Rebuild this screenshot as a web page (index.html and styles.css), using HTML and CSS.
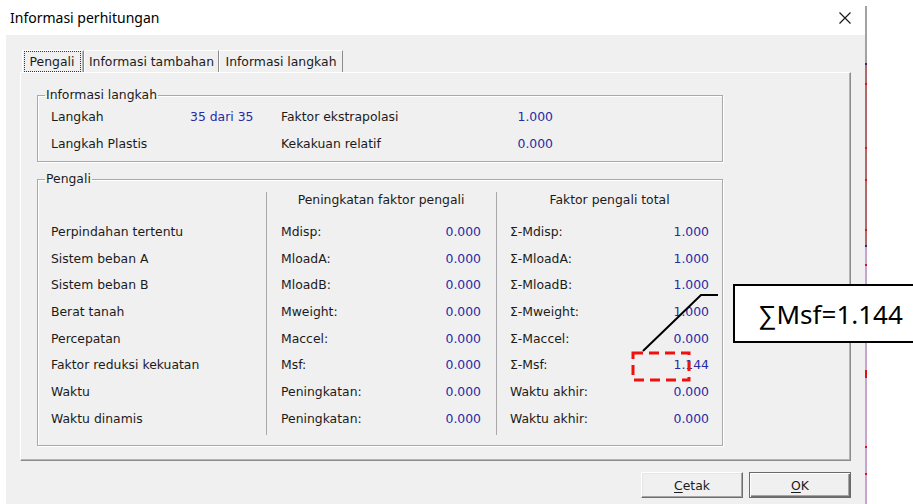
FILE: index.html
```html
<!DOCTYPE html>
<html lang="id">
<head>
<meta charset="utf-8">
<title>Informasi perhitungan</title>
<link rel="stylesheet" href="styles.css">
</head>
<body>
<div class="screen">
  <div class="window">
    <div class="titlebar">
      <span class="title">Informasi perhitungan</span>
      <svg class="close" width="14" height="14" viewBox="0 0 14 14" aria-label="Tutup">
        <path d="M1.5 1.5L12.5 12.5M12.5 1.5L1.5 12.5" stroke="#1a1a1a" stroke-width="1.2" fill="none"/>
      </svg>
    </div>
    <div class="client">
      <div class="tabs">
        <div class="tab active"><span class="focus">Pengali</span></div>
        <div class="tab t2">Informasi tambahan</div>
        <div class="tab t3">Informasi langkah</div>
      </div>
      <div class="panel">
        <fieldset class="group info">
          <legend>Informasi langkah</legend>
          <div class="info-grid">
            <span>Langkah</span><span class="val">35 dari 35</span><span>Faktor ekstrapolasi</span><span class="val num">1.000</span>
            <span>Langkah Plastis</span><span class="val"></span><span>Kekakuan relatif</span><span class="val num">0.000</span>
          </div>
        </fieldset>
        <fieldset class="group mult">
          <legend>Pengali</legend>
          <div class="cols">
            <div class="col names">
              <div class="head"></div>
              <div class="row">Perpindahan tertentu</div>
              <div class="row">Sistem beban A</div>
              <div class="row">Sistem beban B</div>
              <div class="row">Berat tanah</div>
              <div class="row">Percepatan</div>
              <div class="row">Faktor reduksi kekuatan</div>
              <div class="row">Waktu</div>
              <div class="row">Waktu dinamis</div>
            </div>
            <div class="col inc">
              <div class="head">Peningkatan faktor pengali</div>
              <div class="row"><span>Mdisp:</span><span class="val">0.000</span></div>
              <div class="row"><span>MloadA:</span><span class="val">0.000</span></div>
              <div class="row"><span>MloadB:</span><span class="val">0.000</span></div>
              <div class="row"><span>Mweight:</span><span class="val">0.000</span></div>
              <div class="row"><span>Maccel:</span><span class="val">0.000</span></div>
              <div class="row"><span>Msf:</span><span class="val">0.000</span></div>
              <div class="row"><span>Peningkatan:</span><span class="val">0.000</span></div>
              <div class="row"><span>Peningkatan:</span><span class="val">0.000</span></div>
            </div>
            <div class="col tot">
              <div class="head">Faktor pengali total</div>
              <div class="row"><span>&Sigma;-Mdisp:</span><span class="val">1.000</span></div>
              <div class="row"><span>&Sigma;-MloadA:</span><span class="val">1.000</span></div>
              <div class="row"><span>&Sigma;-MloadB:</span><span class="val">1.000</span></div>
              <div class="row"><span>&Sigma;-Mweight:</span><span class="val">1.000</span></div>
              <div class="row"><span>&Sigma;-Maccel:</span><span class="val">0.000</span></div>
              <div class="row"><span>&Sigma;-Msf:</span><span class="val">1.144</span></div>
              <div class="row"><span>Waktu akhir:</span><span class="val">0.000</span></div>
              <div class="row"><span>Waktu akhir:</span><span class="val">0.000</span></div>
            </div>
          </div>
        </fieldset>
      </div>
      <div class="buttons">
        <button class="btn" type="button"><u>C</u>etak</button>
        <button class="btn default" type="button"><u>O</u>K</button>
      </div>
    </div>
  </div>
  <div class="edge"></div>
</div>

<!-- annotation: leader line and dashed highlight around the Msf total -->
<svg class="marks" width="913" height="504" viewBox="0 0 913 504">
  <path d="M718 295H701L643 351" stroke="#000" stroke-width="2" fill="none"/>
  <rect x="633" y="353" width="56" height="27" fill="none" stroke="#f01010" stroke-width="3" stroke-dasharray="10 6"/>
</svg>
<div class="callout">&sum;Msf=1.144</div>
</body>
</html>
```

FILE: styles.css
```css
* { box-sizing: border-box; }

html, body {
  margin: 0;
  padding: 0;
}

body {
  position: relative;
  width: 913px;
  height: 504px;
  overflow: hidden;
  background: #fff;
  font-family: "DejaVu Sans", sans-serif;
  font-size: 12.4px;
  color: #1b1b1b;
}

.screen {
  display: flex;
  height: 504px;
}

.window {
  width: 865px;
  display: flex;
  flex-direction: column;
}

/* title bar */
.titlebar {
  height: 35px;
  display: flex;
  align-items: center;
  justify-content: space-between;
  padding: 0 13px 0 10px;
  font-family: "Noto Sans", sans-serif;
  font-size: 14px;
  color: #000;
}

.close { display: block; }

/* dialog client area */
.client {
  flex: 1;
  margin-left: 6px;
  background: #f0f0f0;
  padding: 15px 14px 0;
  display: flex;
  flex-direction: column;
}

.tabs {
  display: flex;
  height: 22px;
  padding-left: 2px;
}

.tab {
  height: 22px;
  display: flex;
  align-items: center;
  justify-content: center;
  border-top: 1px solid #fff;
  border-left: 1px solid #fff;
  border-right: 1px solid #8c8c8c;
  line-height: 16px;
  white-space: nowrap;
}

.tab.active {
  width: 62px;
  padding: 0 2px 0 0;
  box-shadow: inset -1px 0 0 #b9b9b9;
}

.focus {
  display: block;
  width: 57px;
  height: 21px;
  line-height: 19px;
  text-align: center;
  border: 1px dotted #333;
}

.tab.t2 { width: 135px; }
.tab.t3 { width: 124px; }

.panel {
  height: 389px;
  border: 1px solid;
  border-color: #fff #8c8c8c #8c8c8c #fff;
  box-shadow: inset -1px -1px 0 #b4b4b4;
  padding: 14px 0 0 16px;
}

/* etched group boxes */
.group {
  margin: 0;
  padding: 0;
  width: 686px;
  min-inline-size: 0;
  border: 1px solid #a9a9a9;
  box-shadow: inset 1px 1px 0 #fff, 1px 1px 0 #fff;
}

.group legend {
  margin-left: 7px;
  padding: 0 1px;
  line-height: 16px;
}

.group.mult { margin-top: 9px; }

.val { color: #2a2aa6; }

.info-grid {
  display: grid;
  grid-template-columns: 139px 91px 200px 72px;
  grid-auto-rows: 27px;
  align-items: center;
  padding: 0 0 4px 13px;
}

.info-grid .num { text-align: right; }

.cols {
  display: flex;
  margin: 5px 0 10px;
}

.col {
  display: flex;
  flex-direction: column;
  padding-bottom: 3px;
}

.col.names {
  width: 228px;
  padding-left: 13px;
}

.col.inc {
  width: 230px;
  border-left: 1px solid #a9a9a9;
  padding: 0 15px 3px 14px;
}

.col.tot {
  flex: 1;
  border-left: 1px solid #a9a9a9;
  padding: 0 13px 3px 13px;
}

.head {
  height: 16px;
  line-height: 16px;
  text-align: center;
  margin-bottom: 10px;
  white-space: nowrap;
}

.row {
  height: 26.7px;
  display: flex;
  align-items: center;
  justify-content: space-between;
  white-space: nowrap;
}

/* push buttons */
.buttons {
  display: flex;
  justify-content: flex-end;
  gap: 6px;
  margin-top: 11px;
}

.btn {
  width: 102px;
  height: 26px;
  padding: 0;
  font: inherit;
  color: #1b1b1b;
  background: #f0f0f0;
  border: 1px solid;
  border-color: #fff #6e6e6e #6e6e6e #fff;
  box-shadow: inset -1px -1px 0 #a5a5a5, inset 1px 1px 0 #e6e6e6;
}

.btn.default {
  border: 1px solid #6a6a6a;
  box-shadow: inset 1px 1px 0 #fff, inset -1px -1px 0 #6e6e6e, inset -2px -2px 0 #a5a5a5;
}

.btn u { text-underline-offset: 2px; }

/* neighbouring window edge visible to the right of the dialog */
.edge {
  width: 2px;
  height: 498px;
  margin-top: 6px;
  background: linear-gradient(to bottom,
    #a2a2a2 0, #a2a2a2 57px,
    #2b2b7a 57px, #2b2b7a 59px,
    #b06a6a 59px, #b06a6a 77px,
    #e01010 77px, #e01010 79px,
    #b06a6a 79px, #b06a6a 141px,
    #e01010 141px, #e01010 143px,
    #b06a6a 143px, #b06a6a 173px,
    #e01010 173px, #e01010 175px,
    #b06a6a 175px, #b06a6a 223px,
    #e01010 223px, #e01010 225px,
    #b06a6a 225px, #b06a6a 239px,
    #2b2b7a 239px, #2b2b7a 241px,
    #c6a6cf 241px, #c6a6cf 258px,
    #e01010 258px, #e01010 260px,
    #c6a6cf 260px, #c6a6cf 364px,
    #e01010 364px, #e01010 372px,
    #c6a6cf 372px, #c6a6cf 440px,
    #e01010 440px, #e01010 442px,
    #c6a6cf 442px, #c6a6cf 467px,
    #e01010 467px, #e01010 469px,
    #c6a6cf 469px);
}

/* annotation overlay */
.marks {
  position: absolute;
  left: 0;
  top: 0;
  pointer-events: none;
}

.callout {
  position: absolute;
  left: 733px;
  top: 284px;
  width: 200px;
  height: 59px;
  border: 2px solid #000;
  background: #fff;
  display: flex;
  align-items: center;
  padding-left: 23px;
  font-family: "Noto Sans", sans-serif;
  font-size: 26px;
  color: #000;
}
```
